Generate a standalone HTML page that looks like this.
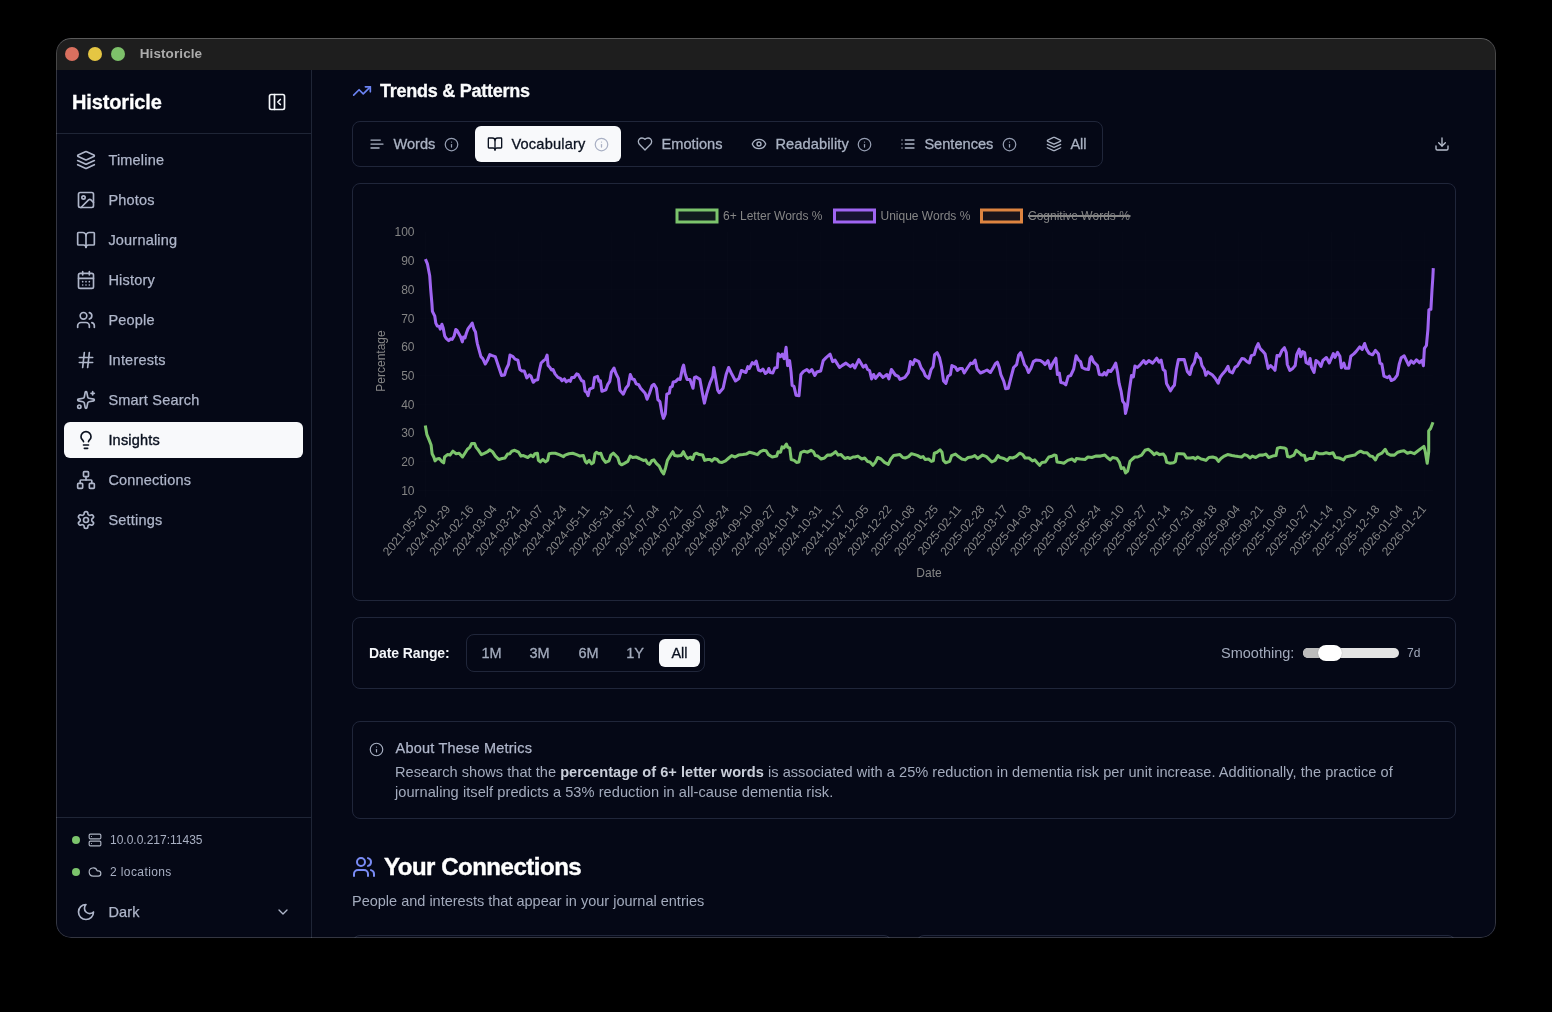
<!DOCTYPE html>
<html><head><meta charset="utf-8"><title>Historicle</title>
<style>
*{box-sizing:border-box;margin:0;padding:0}
html,body{width:1552px;height:1012px;background:#000;overflow:hidden}
body{font-family:"Liberation Sans",sans-serif;position:relative;-webkit-font-smoothing:antialiased}
#win{will-change:transform;position:absolute;left:56px;top:38px;width:1440px;height:900px;border-radius:15px;overflow:hidden;background:#050816}
#winborder{position:absolute;inset:0;border-radius:15px;border:1px solid rgba(255,255,255,0.19);border-top-color:rgba(255,255,255,0.27);pointer-events:none;z-index:50}
#titlebar{position:absolute;left:0;top:0;width:1440px;height:32px;background:#1e1e1e}
.tl{position:absolute;top:9px;width:14px;height:14px;border-radius:50%;display:block}
#wtitle{font-weight:bold;font-size:13.5px;color:#acacac;letter-spacing:0.1px}
#app{position:absolute;left:0;top:0;width:1440px;height:900px}
#side{position:absolute;left:0;top:32px;width:256px;height:868px;border-right:1px solid #1f2536}
#sidehead{position:absolute;left:0;top:95px;width:255px;height:1px;background:#1f2536}
#sidefoot{position:absolute;left:0;top:779px;width:255px;height:1px;background:#1f2536}
.t{position:absolute;white-space:nowrap;transform:translateY(-50%);line-height:1;display:block}
.ic{position:absolute;display:block;overflow:visible}
.h-brand{font-weight:bold;font-size:20px;color:#fff;letter-spacing:-0.15px;-webkit-text-stroke:0.3px #fff}
.nav{font-size:14.5px;font-weight:normal;letter-spacing:0.2px;-webkit-text-stroke:0.25px currentColor}
.navact{position:absolute;width:239px;height:36px;border-radius:6px;background:#f8f9fb}
.dot{position:absolute;width:8px;height:8px;border-radius:50%;background:#7cc46c}
.st{font-size:12px;color:#a8afc2}
.h-sec{font-weight:bold;font-size:18px;color:#fafbfc;letter-spacing:-0.25px;-webkit-text-stroke:0.3px #fafbfc}
.tabs{position:absolute;border:1px solid #20263a;border-radius:8px}
.tabact{position:absolute;background:#f8f9fb;border-radius:6px}
.tab{font-size:14.6px;-webkit-text-stroke:0.3px currentColor}
.card{position:absolute;border:1px solid #20263a;border-radius:8px}
.chart{position:absolute;display:block}
.b14{font-weight:bold;font-size:14px;color:#f4f6fa;letter-spacing:-0.1px}
.seg{position:absolute;border:1px solid #20263a;border-radius:8px}
.segact{position:absolute;background:#f8f9fb;border-radius:6px}
.segl{font-size:14.5px;-webkit-text-stroke:0.3px currentColor}
.sm14{font-size:14.5px;color:#a3abbd}
.sm12{font-size:12px;color:#a3abbd}
.trk{position:absolute;width:96px;height:10px;border-radius:5px;background:#e4e4e4}
.trkf{position:absolute;width:30px;height:10px;border-radius:5px 0 0 5px;background:#bcbcbc}
.thumb{position:absolute;width:24px;height:16px;border-radius:8px;background:#fff;box-shadow:0 0 1px rgba(0,0,0,.4)}
.abt{font-size:14.5px;color:#b0b7cb;letter-spacing:0.2px;-webkit-text-stroke:0.25px currentColor}
.para{position:absolute;font-size:14.6px;line-height:20px;color:#a3abbd;white-space:nowrap}
.para b{color:#c9ced9}
.h-big{font-weight:bold;font-size:24px;color:#fff;letter-spacing:-0.48px;-webkit-text-stroke:0.4px #fff}
.sub{font-size:14.5px;color:#a3abbd}
#ln1{letter-spacing:0.02px}
#ln2{letter-spacing:0.05px}

</style></head>
<body>
<div id="win">
  <div id="titlebar">
    <i class="tl" style="left:9px;background:#d9705f"></i><i class="tl" style="left:32px;background:#e5c643"></i><i class="tl" style="left:55px;background:#7dc06a"></i>
    <span class="t" id="wtitle" style="left:83.7px;top:16px">Historicle</span>
  </div>
  <div id="app">
    <div id="side"></div>
    <div id="sidehead"></div>
    <div id="sidefoot"></div>
<span class="t h-brand" style="left:16px;top:64px;">Historicle</span>
<svg class="ic" style="left:211px;top:54px;width:20px;height:20px;" viewBox="0 0 24 24" fill="none" stroke="#f4f6fa" stroke-width="2" stroke-linecap="round" stroke-linejoin="round"><rect width="18" height="18" x="3" y="3" rx="2"/><path d="M9 3v18"/><path d="m16 15-3-3 3-3"/></svg>
<svg class="ic" style="left:20px;top:112px;width:20px;height:20px;" viewBox="0 0 24 24" fill="none" stroke="#afb6ca" stroke-width="2" stroke-linecap="round" stroke-linejoin="round"><path d="m12.83 2.18a2 2 0 0 0-1.66 0L2.6 6.08a1 1 0 0 0 0 1.83l8.58 3.91a2 2 0 0 0 1.66 0l8.58-3.9a1 1 0 0 0 0-1.83Z"/><path d="m22 17.65-9.17 4.16a2 2 0 0 1-1.66 0L2 17.65"/><path d="m22 12.65-9.17 4.16a2 2 0 0 1-1.66 0L2 12.65"/></svg>
<span class="t nav" style="left:52.400000000000006px;top:122px;color:#afb6ca">Timeline</span>
<svg class="ic" style="left:20px;top:152px;width:20px;height:20px;" viewBox="0 0 24 24" fill="none" stroke="#afb6ca" stroke-width="2" stroke-linecap="round" stroke-linejoin="round"><rect width="18" height="18" x="3" y="3" rx="2" ry="2"/><circle cx="9" cy="9" r="2"/><path d="m21 15-3.086-3.086a2 2 0 0 0-2.828 0L6 21"/></svg>
<span class="t nav" style="left:52.400000000000006px;top:162px;color:#afb6ca">Photos</span>
<svg class="ic" style="left:20px;top:192px;width:20px;height:20px;" viewBox="0 0 24 24" fill="none" stroke="#afb6ca" stroke-width="2" stroke-linecap="round" stroke-linejoin="round"><path d="M12 7v14"/><path d="M3 18a1 1 0 0 1-1-1V4a1 1 0 0 1 1-1h5a4 4 0 0 1 4 4 4 4 0 0 1 4-4h5a1 1 0 0 1 1 1v13a1 1 0 0 1-1 1h-6a3 3 0 0 0-3 3 3 3 0 0 0-3-3z"/></svg>
<span class="t nav" style="left:52.400000000000006px;top:202px;color:#afb6ca">Journaling</span>
<svg class="ic" style="left:20px;top:232px;width:20px;height:20px;" viewBox="0 0 24 24" fill="none" stroke="#afb6ca" stroke-width="2" stroke-linecap="round" stroke-linejoin="round"><path d="M8 2v4"/><path d="M16 2v4"/><rect width="18" height="18" x="3" y="4" rx="2"/><path d="M3 10h18"/><path d="M8 14h.01"/><path d="M12 14h.01"/><path d="M16 14h.01"/><path d="M8 18h.01"/><path d="M12 18h.01"/><path d="M16 18h.01"/></svg>
<span class="t nav" style="left:52.400000000000006px;top:242px;color:#afb6ca">History</span>
<svg class="ic" style="left:20px;top:272px;width:20px;height:20px;" viewBox="0 0 24 24" fill="none" stroke="#afb6ca" stroke-width="2" stroke-linecap="round" stroke-linejoin="round"><path d="M16 21v-2a4 4 0 0 0-4-4H6a4 4 0 0 0-4 4v2"/><circle cx="9" cy="7" r="4"/><path d="M22 21v-2a4 4 0 0 0-3-3.87"/><path d="M16 3.13a4 4 0 0 1 0 7.75"/></svg>
<span class="t nav" style="left:52.400000000000006px;top:282px;color:#afb6ca">People</span>
<svg class="ic" style="left:20px;top:312px;width:20px;height:20px;" viewBox="0 0 24 24" fill="none" stroke="#afb6ca" stroke-width="2" stroke-linecap="round" stroke-linejoin="round"><line x1="4" x2="20" y1="9" y2="9"/><line x1="4" x2="20" y1="15" y2="15"/><line x1="10" x2="8" y1="3" y2="21"/><line x1="16" x2="14" y1="3" y2="21"/></svg>
<span class="t nav" style="left:52.400000000000006px;top:322px;color:#afb6ca">Interests</span>
<svg class="ic" style="left:20px;top:352px;width:20px;height:20px;" viewBox="0 0 24 24" fill="none" stroke="#afb6ca" stroke-width="2" stroke-linecap="round" stroke-linejoin="round"><path d="M11.017 2.814a1 1 0 0 1 1.966 0l1.051 5.558a2 2 0 0 0 1.594 1.594l5.558 1.051a1 1 0 0 1 0 1.966l-5.558 1.051a2 2 0 0 0-1.594 1.594l-1.051 5.558a1 1 0 0 1-1.966 0l-1.051-5.558a2 2 0 0 0-1.594-1.594l-5.558-1.051a1 1 0 0 1 0-1.966l5.558-1.051a2 2 0 0 0 1.594-1.594z"/><path d="M20 2v4"/><path d="M22 4h-4"/><circle cx="4" cy="20" r="2"/></svg>
<span class="t nav" style="left:52.400000000000006px;top:362px;color:#afb6ca">Smart Search</span>
<div class="navact" style="left:8px;top:384px"></div>
<svg class="ic" style="left:20px;top:392px;width:20px;height:20px;" viewBox="0 0 24 24" fill="none" stroke="#0b1220" stroke-width="2" stroke-linecap="round" stroke-linejoin="round"><path d="M15 14c.2-1 .7-1.700 1.500-2.500 1-.9 1.500-2.200 1.500-3.500A6 6 0 0 0 6 8c0 1 .2 2.200 1.500 3.500.7.700 1.300 1.500 1.500 2.500"/><path d="M9 18h6"/><path d="M10 22h4"/></svg>
<span class="t nav" style="left:52.400000000000006px;top:402px;color:#0b1220;-webkit-text-stroke:0.4px currentColor">Insights</span>
<svg class="ic" style="left:20px;top:432px;width:20px;height:20px;" viewBox="0 0 24 24" fill="none" stroke="#afb6ca" stroke-width="2" stroke-linecap="round" stroke-linejoin="round"><rect x="16" y="16" width="6" height="6" rx="1"/><rect x="2" y="16" width="6" height="6" rx="1"/><rect x="9" y="2" width="6" height="6" rx="1"/><path d="M5 16v-3a1 1 0 0 1 1-1h12a1 1 0 0 1 1 1v3"/><path d="M12 12V8"/></svg>
<span class="t nav" style="left:52.400000000000006px;top:442px;color:#afb6ca">Connections</span>
<svg class="ic" style="left:20px;top:472px;width:20px;height:20px;" viewBox="0 0 24 24" fill="none" stroke="#afb6ca" stroke-width="2" stroke-linecap="round" stroke-linejoin="round"><path d="M12.220 2h-.440a2 2 0 0 0-2 2v.180a2 2 0 0 1-1 1.730l-.430.250a2 2 0 0 1-2 0l-.150-.080a2 2 0 0 0-2.730.730l-.220.380a2 2 0 0 0 .730 2.730l.150.100a2 2 0 0 1 1 1.720v.510a2 2 0 0 1-1 1.740l-.150.090a2 2 0 0 0-.730 2.730l.220.380a2 2 0 0 0 2.730.730l.150-.080a2 2 0 0 1 2 0l.430.250a2 2 0 0 1 1 1.730V20a2 2 0 0 0 2 2h.440a2 2 0 0 0 2-2v-.180a2 2 0 0 1 1-1.730l.430-.250a2 2 0 0 1 2 0l.150.080a2 2 0 0 0 2.730-.730l.220-.390a2 2 0 0 0-.730-2.730l-.150-.080a2 2 0 0 1-1-1.740v-.500a2 2 0 0 1 1-1.740l.150-.090a2 2 0 0 0 .730-2.730l-.220-.380a2 2 0 0 0-2.730-.730l-.150.080a2 2 0 0 1-2 0l-.430-.250a2 2 0 0 1-1-1.730V4a2 2 0 0 0-2-2z"/><circle cx="12" cy="12" r="3"/></svg>
<span class="t nav" style="left:52.400000000000006px;top:482px;color:#afb6ca">Settings</span>
<div class="dot" style="left:16px;top:798px"></div>
<svg class="ic" style="left:32px;top:795px;width:14px;height:14px;" viewBox="0 0 24 24" fill="none" stroke="#aeb5c4" stroke-width="2" stroke-linecap="round" stroke-linejoin="round"><rect width="20" height="8" x="2" y="2" rx="2" ry="2"/><rect width="20" height="8" x="2" y="14" rx="2" ry="2"/><line x1="6" x2="6.01" y1="6" y2="6"/><line x1="6" x2="6.01" y1="18" y2="18"/></svg>
<span class="t st" style="left:54px;top:802px;">10.0.0.217:11435</span>
<div class="dot" style="left:16px;top:830px"></div>
<svg class="ic" style="left:32px;top:827px;width:14px;height:14px;" viewBox="0 0 24 24" fill="none" stroke="#aeb5c4" stroke-width="2" stroke-linecap="round" stroke-linejoin="round"><path d="M17.5 19H9a7 7 0 1 1 6.710-9h1.790a4.500 4.500 0 1 1 0 9Z"/></svg>
<span class="t st" style="left:54px;top:834px;letter-spacing:0.4px">2 locations</span>
<svg class="ic" style="left:20px;top:864px;width:20px;height:20px;" viewBox="0 0 24 24" fill="none" stroke="#afb6ca" stroke-width="2" stroke-linecap="round" stroke-linejoin="round"><path d="M12 3a6 6 0 0 0 9 9 9 9 0 1 1-9-9Z"/></svg>
<span class="t nav" style="left:52.400000000000006px;top:874px;color:#afb6ca">Dark</span>
<svg class="ic" style="left:219px;top:866px;width:16px;height:16px;" viewBox="0 0 24 24" fill="none" stroke="#afb6ca" stroke-width="2" stroke-linecap="round" stroke-linejoin="round"><path d="m6 9 6 6 6-6"/></svg>
<svg class="ic" style="left:296px;top:43px;width:20px;height:20px;" viewBox="0 0 24 24" fill="none" stroke="#6b83f2" stroke-width="2" stroke-linecap="round" stroke-linejoin="round"><polyline points="22 7 13.5 15.5 8.5 10.5 2 17"/><polyline points="16 7 22 7 22 13"/></svg>
<span class="t h-sec" style="left:324px;top:53px;">Trends &amp; Patterns</span>
<div class="tabs" style="left:296px;top:83px;width:751px;height:46px"></div>
<div class="tabact" style="left:419px;top:88px;width:146px;height:36px"></div>
<svg class="ic" style="left:313px;top:98px;width:16px;height:16px;" viewBox="0 0 24 24" fill="none" stroke="#aab2c3" stroke-width="2" stroke-linecap="round" stroke-linejoin="round"><path d="M17 6.1H3"/><path d="M21 12.100H3"/><path d="M15.100 18H3"/></svg>
<span class="t tab" style="left:337.4px;top:106px;color:#aab2c3;letter-spacing:0px">Words</span>
<svg class="ic" style="left:387.5px;top:98.5px;width:15px;height:15px;" viewBox="0 0 24 24" fill="none" stroke="#959db1" stroke-width="2" stroke-linecap="round" stroke-linejoin="round"><circle cx="12" cy="12" r="10"/><path d="M12 16v-4"/><path d="M12 8h.01"/></svg>
<svg class="ic" style="left:431px;top:98px;width:16px;height:16px;" viewBox="0 0 24 24" fill="none" stroke="#0b1220" stroke-width="2" stroke-linecap="round" stroke-linejoin="round"><path d="M12 7v14"/><path d="M3 18a1 1 0 0 1-1-1V4a1 1 0 0 1 1-1h5a4 4 0 0 1 4 4 4 4 0 0 1 4-4h5a1 1 0 0 1 1 1v13a1 1 0 0 1-1 1h-6a3 3 0 0 0-3 3 3 3 0 0 0-3-3z"/></svg>
<span class="t tab" style="left:455.4px;top:106px;color:#0b1220;letter-spacing:0.2px">Vocabulary</span>
<svg class="ic" style="left:537.5px;top:98.5px;width:15px;height:15px;" viewBox="0 0 24 24" fill="none" stroke="#a9b0c4" stroke-width="2" stroke-linecap="round" stroke-linejoin="round"><circle cx="12" cy="12" r="10"/><path d="M12 16v-4"/><path d="M12 8h.01"/></svg>
<svg class="ic" style="left:581px;top:98px;width:16px;height:16px;" viewBox="0 0 24 24" fill="none" stroke="#aab2c3" stroke-width="2" stroke-linecap="round" stroke-linejoin="round"><path d="M19 14c1.490-1.460 3-3.210 3-5.500A5.500 5.500 0 0 0 16.500 3c-1.760 0-3 .500-4.500 2-1.500-1.500-2.740-2-4.500-2A5.500 5.500 0 0 0 2 8.500c0 2.300 1.500 4.050 3 5.500l7 7Z"/></svg>
<span class="t tab" style="left:605.4px;top:106px;color:#aab2c3;letter-spacing:0.05px">Emotions</span>
<svg class="ic" style="left:695px;top:98px;width:16px;height:16px;" viewBox="0 0 24 24" fill="none" stroke="#aab2c3" stroke-width="2" stroke-linecap="round" stroke-linejoin="round"><path d="M2.062 12.348a1 1 0 0 1 0-.696 10.750 10.750 0 0 1 19.876 0 1 1 0 0 1 0 .696 10.750 10.750 0 0 1-19.876 0"/><circle cx="12" cy="12" r="3"/></svg>
<span class="t tab" style="left:719.4px;top:106px;color:#aab2c3;letter-spacing:0.12px">Readability</span>
<svg class="ic" style="left:800.5px;top:98.5px;width:15px;height:15px;" viewBox="0 0 24 24" fill="none" stroke="#959db1" stroke-width="2" stroke-linecap="round" stroke-linejoin="round"><circle cx="12" cy="12" r="10"/><path d="M12 16v-4"/><path d="M12 8h.01"/></svg>
<svg class="ic" style="left:844px;top:98px;width:16px;height:16px;" viewBox="0 0 24 24" fill="none" stroke="#aab2c3" stroke-width="2" stroke-linecap="round" stroke-linejoin="round"><line x1="8" x2="21" y1="6" y2="6"/><line x1="8" x2="21" y1="12" y2="12"/><line x1="8" x2="21" y1="18" y2="18"/><line x1="3" x2="3.010" y1="6" y2="6"/><line x1="3" x2="3.010" y1="12" y2="12"/><line x1="3" x2="3.010" y1="18" y2="18"/></svg>
<span class="t tab" style="left:868.4px;top:106px;color:#aab2c3;letter-spacing:0px">Sentences</span>
<svg class="ic" style="left:945.5px;top:98.5px;width:15px;height:15px;" viewBox="0 0 24 24" fill="none" stroke="#959db1" stroke-width="2" stroke-linecap="round" stroke-linejoin="round"><circle cx="12" cy="12" r="10"/><path d="M12 16v-4"/><path d="M12 8h.01"/></svg>
<svg class="ic" style="left:990px;top:98px;width:16px;height:16px;" viewBox="0 0 24 24" fill="none" stroke="#aab2c3" stroke-width="2" stroke-linecap="round" stroke-linejoin="round"><path d="m12.83 2.18a2 2 0 0 0-1.66 0L2.6 6.08a1 1 0 0 0 0 1.83l8.58 3.91a2 2 0 0 0 1.66 0l8.58-3.9a1 1 0 0 0 0-1.83Z"/><path d="m22 17.65-9.17 4.16a2 2 0 0 1-1.66 0L2 17.65"/><path d="m22 12.65-9.17 4.16a2 2 0 0 1-1.66 0L2 12.65"/></svg>
<span class="t tab" style="left:1014.4px;top:106px;color:#aab2c3;letter-spacing:0px">All</span>
<svg class="ic" style="left:1378px;top:98px;width:16px;height:16px;" viewBox="0 0 24 24" fill="none" stroke="#b9c0cf" stroke-width="2" stroke-linecap="round" stroke-linejoin="round"><path d="M21 15v4a2 2 0 0 1-2 2H5a2 2 0 0 1-2-2v-4"/><polyline points="7 10 12 15 17 10"/><line x1="12" x2="12" y1="15" y2="3"/></svg>
<div class="card" style="left:296px;top:145px;width:1104px;height:418px"></div><svg class="chart" style="left:296px;top:145px" width="1104" height="418" viewBox="0 0 1104 418" font-family="Liberation Sans, sans-serif">
<line x1="66" x2="1081" y1="49.0" y2="49.0" stroke="rgba(255,255,255,0.012)" stroke-width="1"/>
<line x1="66" x2="1081" y1="77.7" y2="77.7" stroke="rgba(255,255,255,0.012)" stroke-width="1"/>
<line x1="66" x2="1081" y1="106.4" y2="106.4" stroke="rgba(255,255,255,0.012)" stroke-width="1"/>
<line x1="66" x2="1081" y1="135.2" y2="135.2" stroke="rgba(255,255,255,0.012)" stroke-width="1"/>
<line x1="66" x2="1081" y1="163.9" y2="163.9" stroke="rgba(255,255,255,0.012)" stroke-width="1"/>
<line x1="66" x2="1081" y1="192.6" y2="192.6" stroke="rgba(255,255,255,0.012)" stroke-width="1"/>
<line x1="66" x2="1081" y1="221.3" y2="221.3" stroke="rgba(255,255,255,0.012)" stroke-width="1"/>
<line x1="66" x2="1081" y1="250.1" y2="250.1" stroke="rgba(255,255,255,0.012)" stroke-width="1"/>
<line x1="66" x2="1081" y1="278.8" y2="278.8" stroke="rgba(255,255,255,0.012)" stroke-width="1"/>
<line x1="66" x2="1081" y1="307.5" y2="307.5" stroke="rgba(255,255,255,0.012)" stroke-width="1"/>
<line x1="73.5" x2="73.5" y1="49" y2="314" stroke="rgba(255,255,255,0.012)" stroke-width="1"/>
<line x1="96.7" x2="96.7" y1="49" y2="314" stroke="rgba(255,255,255,0.012)" stroke-width="1"/>
<line x1="120.0" x2="120.0" y1="49" y2="314" stroke="rgba(255,255,255,0.012)" stroke-width="1"/>
<line x1="143.2" x2="143.2" y1="49" y2="314" stroke="rgba(255,255,255,0.012)" stroke-width="1"/>
<line x1="166.4" x2="166.4" y1="49" y2="314" stroke="rgba(255,255,255,0.012)" stroke-width="1"/>
<line x1="189.6" x2="189.6" y1="49" y2="314" stroke="rgba(255,255,255,0.012)" stroke-width="1"/>
<line x1="212.9" x2="212.9" y1="49" y2="314" stroke="rgba(255,255,255,0.012)" stroke-width="1"/>
<line x1="236.1" x2="236.1" y1="49" y2="314" stroke="rgba(255,255,255,0.012)" stroke-width="1"/>
<line x1="259.3" x2="259.3" y1="49" y2="314" stroke="rgba(255,255,255,0.012)" stroke-width="1"/>
<line x1="282.6" x2="282.6" y1="49" y2="314" stroke="rgba(255,255,255,0.012)" stroke-width="1"/>
<line x1="305.8" x2="305.8" y1="49" y2="314" stroke="rgba(255,255,255,0.012)" stroke-width="1"/>
<line x1="329.0" x2="329.0" y1="49" y2="314" stroke="rgba(255,255,255,0.012)" stroke-width="1"/>
<line x1="352.3" x2="352.3" y1="49" y2="314" stroke="rgba(255,255,255,0.012)" stroke-width="1"/>
<line x1="375.5" x2="375.5" y1="49" y2="314" stroke="rgba(255,255,255,0.012)" stroke-width="1"/>
<line x1="398.7" x2="398.7" y1="49" y2="314" stroke="rgba(255,255,255,0.012)" stroke-width="1"/>
<line x1="422.0" x2="422.0" y1="49" y2="314" stroke="rgba(255,255,255,0.012)" stroke-width="1"/>
<line x1="445.2" x2="445.2" y1="49" y2="314" stroke="rgba(255,255,255,0.012)" stroke-width="1"/>
<line x1="468.4" x2="468.4" y1="49" y2="314" stroke="rgba(255,255,255,0.012)" stroke-width="1"/>
<line x1="491.6" x2="491.6" y1="49" y2="314" stroke="rgba(255,255,255,0.012)" stroke-width="1"/>
<line x1="514.9" x2="514.9" y1="49" y2="314" stroke="rgba(255,255,255,0.012)" stroke-width="1"/>
<line x1="538.1" x2="538.1" y1="49" y2="314" stroke="rgba(255,255,255,0.012)" stroke-width="1"/>
<line x1="561.3" x2="561.3" y1="49" y2="314" stroke="rgba(255,255,255,0.012)" stroke-width="1"/>
<line x1="584.6" x2="584.6" y1="49" y2="314" stroke="rgba(255,255,255,0.012)" stroke-width="1"/>
<line x1="607.8" x2="607.8" y1="49" y2="314" stroke="rgba(255,255,255,0.012)" stroke-width="1"/>
<line x1="631.0" x2="631.0" y1="49" y2="314" stroke="rgba(255,255,255,0.012)" stroke-width="1"/>
<line x1="654.2" x2="654.2" y1="49" y2="314" stroke="rgba(255,255,255,0.012)" stroke-width="1"/>
<line x1="677.5" x2="677.5" y1="49" y2="314" stroke="rgba(255,255,255,0.012)" stroke-width="1"/>
<line x1="700.7" x2="700.7" y1="49" y2="314" stroke="rgba(255,255,255,0.012)" stroke-width="1"/>
<line x1="723.9" x2="723.9" y1="49" y2="314" stroke="rgba(255,255,255,0.012)" stroke-width="1"/>
<line x1="747.2" x2="747.2" y1="49" y2="314" stroke="rgba(255,255,255,0.012)" stroke-width="1"/>
<line x1="770.4" x2="770.4" y1="49" y2="314" stroke="rgba(255,255,255,0.012)" stroke-width="1"/>
<line x1="793.6" x2="793.6" y1="49" y2="314" stroke="rgba(255,255,255,0.012)" stroke-width="1"/>
<line x1="816.9" x2="816.9" y1="49" y2="314" stroke="rgba(255,255,255,0.012)" stroke-width="1"/>
<line x1="840.1" x2="840.1" y1="49" y2="314" stroke="rgba(255,255,255,0.012)" stroke-width="1"/>
<line x1="863.3" x2="863.3" y1="49" y2="314" stroke="rgba(255,255,255,0.012)" stroke-width="1"/>
<line x1="886.6" x2="886.6" y1="49" y2="314" stroke="rgba(255,255,255,0.012)" stroke-width="1"/>
<line x1="909.8" x2="909.8" y1="49" y2="314" stroke="rgba(255,255,255,0.012)" stroke-width="1"/>
<line x1="933.0" x2="933.0" y1="49" y2="314" stroke="rgba(255,255,255,0.012)" stroke-width="1"/>
<line x1="956.2" x2="956.2" y1="49" y2="314" stroke="rgba(255,255,255,0.012)" stroke-width="1"/>
<line x1="979.5" x2="979.5" y1="49" y2="314" stroke="rgba(255,255,255,0.012)" stroke-width="1"/>
<line x1="1002.7" x2="1002.7" y1="49" y2="314" stroke="rgba(255,255,255,0.012)" stroke-width="1"/>
<line x1="1025.9" x2="1025.9" y1="49" y2="314" stroke="rgba(255,255,255,0.012)" stroke-width="1"/>
<line x1="1049.2" x2="1049.2" y1="49" y2="314" stroke="rgba(255,255,255,0.012)" stroke-width="1"/>
<line x1="1072.4" x2="1072.4" y1="49" y2="314" stroke="rgba(255,255,255,0.012)" stroke-width="1"/>
<text x="62.5" y="53.3" text-anchor="end" font-size="12" fill="#848484">100</text>
<text x="62.5" y="82.0" text-anchor="end" font-size="12" fill="#848484">90</text>
<text x="62.5" y="110.7" text-anchor="end" font-size="12" fill="#848484">80</text>
<text x="62.5" y="139.5" text-anchor="end" font-size="12" fill="#848484">70</text>
<text x="62.5" y="168.2" text-anchor="end" font-size="12" fill="#848484">60</text>
<text x="62.5" y="196.9" text-anchor="end" font-size="12" fill="#848484">50</text>
<text x="62.5" y="225.6" text-anchor="end" font-size="12" fill="#848484">40</text>
<text x="62.5" y="254.4" text-anchor="end" font-size="12" fill="#848484">30</text>
<text x="62.5" y="283.1" text-anchor="end" font-size="12" fill="#848484">20</text>
<text x="62.5" y="311.8" text-anchor="end" font-size="12" fill="#848484">10</text>
<text transform="translate(32.5,178) rotate(-90)" text-anchor="middle" font-size="12" fill="#868686">Percentage</text>
<text x="577" y="394" text-anchor="middle" font-size="12" fill="#868686">Date</text>
<text transform="translate(75.8,326.5) rotate(-50)" text-anchor="end" font-size="12" fill="#868686">2021-05-20</text>
<text transform="translate(99.0,326.5) rotate(-50)" text-anchor="end" font-size="12" fill="#868686">2024-01-29</text>
<text transform="translate(122.3,326.5) rotate(-50)" text-anchor="end" font-size="12" fill="#868686">2024-02-16</text>
<text transform="translate(145.5,326.5) rotate(-50)" text-anchor="end" font-size="12" fill="#868686">2024-03-04</text>
<text transform="translate(168.7,326.5) rotate(-50)" text-anchor="end" font-size="12" fill="#868686">2024-03-21</text>
<text transform="translate(191.9,326.5) rotate(-50)" text-anchor="end" font-size="12" fill="#868686">2024-04-07</text>
<text transform="translate(215.2,326.5) rotate(-50)" text-anchor="end" font-size="12" fill="#868686">2024-04-24</text>
<text transform="translate(238.4,326.5) rotate(-50)" text-anchor="end" font-size="12" fill="#868686">2024-05-11</text>
<text transform="translate(261.6,326.5) rotate(-50)" text-anchor="end" font-size="12" fill="#868686">2024-05-31</text>
<text transform="translate(284.9,326.5) rotate(-50)" text-anchor="end" font-size="12" fill="#868686">2024-06-17</text>
<text transform="translate(308.1,326.5) rotate(-50)" text-anchor="end" font-size="12" fill="#868686">2024-07-04</text>
<text transform="translate(331.3,326.5) rotate(-50)" text-anchor="end" font-size="12" fill="#868686">2024-07-21</text>
<text transform="translate(354.6,326.5) rotate(-50)" text-anchor="end" font-size="12" fill="#868686">2024-08-07</text>
<text transform="translate(377.8,326.5) rotate(-50)" text-anchor="end" font-size="12" fill="#868686">2024-08-24</text>
<text transform="translate(401.0,326.5) rotate(-50)" text-anchor="end" font-size="12" fill="#868686">2024-09-10</text>
<text transform="translate(424.3,326.5) rotate(-50)" text-anchor="end" font-size="12" fill="#868686">2024-09-27</text>
<text transform="translate(447.5,326.5) rotate(-50)" text-anchor="end" font-size="12" fill="#868686">2024-10-14</text>
<text transform="translate(470.7,326.5) rotate(-50)" text-anchor="end" font-size="12" fill="#868686">2024-10-31</text>
<text transform="translate(493.9,326.5) rotate(-50)" text-anchor="end" font-size="12" fill="#868686">2024-11-17</text>
<text transform="translate(517.2,326.5) rotate(-50)" text-anchor="end" font-size="12" fill="#868686">2024-12-05</text>
<text transform="translate(540.4,326.5) rotate(-50)" text-anchor="end" font-size="12" fill="#868686">2024-12-22</text>
<text transform="translate(563.6,326.5) rotate(-50)" text-anchor="end" font-size="12" fill="#868686">2025-01-08</text>
<text transform="translate(586.9,326.5) rotate(-50)" text-anchor="end" font-size="12" fill="#868686">2025-01-25</text>
<text transform="translate(610.1,326.5) rotate(-50)" text-anchor="end" font-size="12" fill="#868686">2025-02-11</text>
<text transform="translate(633.3,326.5) rotate(-50)" text-anchor="end" font-size="12" fill="#868686">2025-02-28</text>
<text transform="translate(656.5,326.5) rotate(-50)" text-anchor="end" font-size="12" fill="#868686">2025-03-17</text>
<text transform="translate(679.8,326.5) rotate(-50)" text-anchor="end" font-size="12" fill="#868686">2025-04-03</text>
<text transform="translate(703.0,326.5) rotate(-50)" text-anchor="end" font-size="12" fill="#868686">2025-04-20</text>
<text transform="translate(726.2,326.5) rotate(-50)" text-anchor="end" font-size="12" fill="#868686">2025-05-07</text>
<text transform="translate(749.5,326.5) rotate(-50)" text-anchor="end" font-size="12" fill="#868686">2025-05-24</text>
<text transform="translate(772.7,326.5) rotate(-50)" text-anchor="end" font-size="12" fill="#868686">2025-06-10</text>
<text transform="translate(795.9,326.5) rotate(-50)" text-anchor="end" font-size="12" fill="#868686">2025-06-27</text>
<text transform="translate(819.2,326.5) rotate(-50)" text-anchor="end" font-size="12" fill="#868686">2025-07-14</text>
<text transform="translate(842.4,326.5) rotate(-50)" text-anchor="end" font-size="12" fill="#868686">2025-07-31</text>
<text transform="translate(865.6,326.5) rotate(-50)" text-anchor="end" font-size="12" fill="#868686">2025-08-18</text>
<text transform="translate(888.9,326.5) rotate(-50)" text-anchor="end" font-size="12" fill="#868686">2025-09-04</text>
<text transform="translate(912.1,326.5) rotate(-50)" text-anchor="end" font-size="12" fill="#868686">2025-09-21</text>
<text transform="translate(935.3,326.5) rotate(-50)" text-anchor="end" font-size="12" fill="#868686">2025-10-08</text>
<text transform="translate(958.5,326.5) rotate(-50)" text-anchor="end" font-size="12" fill="#868686">2025-10-27</text>
<text transform="translate(981.8,326.5) rotate(-50)" text-anchor="end" font-size="12" fill="#868686">2025-11-14</text>
<text transform="translate(1005.0,326.5) rotate(-50)" text-anchor="end" font-size="12" fill="#868686">2025-12-01</text>
<text transform="translate(1028.2,326.5) rotate(-50)" text-anchor="end" font-size="12" fill="#868686">2025-12-18</text>
<text transform="translate(1051.5,326.5) rotate(-50)" text-anchor="end" font-size="12" fill="#868686">2026-01-04</text>
<text transform="translate(1074.7,326.5) rotate(-50)" text-anchor="end" font-size="12" fill="#868686">2026-01-21</text>
<rect x="325.0" y="27.0" width="40" height="12" fill="rgba(124,196,108,0.10)" stroke="#7cc46c" stroke-width="3"/><text x="371" y="37.30000000000001" font-size="12" fill="#868686">6+ Letter Words %</text>
<rect x="482.5" y="27.0" width="40" height="12" fill="rgba(160,101,242,0.12)" stroke="#a065f2" stroke-width="3"/><text x="528.5" y="37.30000000000001" font-size="12" fill="#868686">Unique Words %</text>
<rect x="629.5" y="27.0" width="40" height="12" fill="rgba(222,132,64,0.10)" stroke="#de8440" stroke-width="3"/><text x="676" y="37.30000000000001" font-size="12" fill="#868686">Cognitive Words %</text><line x1="676" x2="778.5" y1="33" y2="33" stroke="#868686" stroke-width="2"/>
<path d="M73.4,76.1 L75.4,80.8 L77.7,92.7 L78.7,106.5 L79.9,120.4 L80.4,128.3 L82.8,133.2 L83.8,140.1 L85.3,143.1 L87.3,143.6 L88.3,146.1 L89.9,141.3 L91.2,145.1 L92.7,153.0 L94.2,155.4 L96.7,157.7 L98.6,155.9 L100.1,156.4 L102.1,153.0 L103.8,146.5 L105.1,147.5 L107.0,151.0 L108.7,154.0 L110.3,158.9 L111.5,154.0 L113.0,154.9 L114.4,150.0 L116.1,145.6 L118.4,142.6 L120.2,140.1 L121.9,146.1 L123.5,149.0 L124.8,157.9 L125.4,160.8 L128.9,173.6 L130.8,175.6 L133.3,181.0 L135.3,177.6 L137.8,171.6 L140.2,172.6 L143.2,173.6 L146.2,182.5 L149.6,192.4 L152.6,191.9 L154.1,186.5 L156.5,181.5 L158.0,172.1 L161.0,173.6 L163.0,176.1 L165.9,177.1 L167.9,186.5 L169.9,187.9 L172.3,187.9 L174.8,194.9 L177.3,191.9 L178.8,192.9 L181.2,199.3 L183.2,197.3 L185.7,196.8 L187.2,188.4 L189.1,180.0 L191.6,177.6 L193.6,176.1 L195.1,172.1 L196.1,182.5 L198.0,184.5 L199.5,187.0 L201.0,186.5 L203.0,190.9 L205.9,194.4 L208.4,195.4 L209.9,197.8 L212.4,195.9 L214.3,198.8 L216.8,197.3 L218.3,198.3 L219.8,194.4 L222.2,194.4 L224.7,190.9 L226.2,191.4 L229.7,197.8 L231.6,198.3 L233.1,208.2 L234.6,209.2 L236.1,212.7 L237.6,206.2 L241.0,204.7 L242.5,194.4 L245.5,193.4 L247.0,198.3 L248.4,197.8 L249.9,208.2 L253.9,206.7 L255.8,201.3 L257.8,198.3 L259.3,189.4 L262.0,185.0 L263.9,190.5 L266.4,195.4 L267.9,207.3 L271.3,211.2 L273.8,205.3 L276.3,202.3 L278.3,191.5 L280.2,195.9 L282.2,196.4 L284.2,200.9 L286.7,201.8 L288.6,205.3 L293.1,210.2 L295.1,216.2 L297.5,210.2 L300.0,202.8 L302.0,201.3 L304.4,205.3 L305.9,216.7 L307.9,218.6 L309.9,230.0 L311.4,235.4 L313.3,231.0 L314.8,211.2 L317.3,210.2 L318.3,204.3 L320.3,203.3 L321.2,198.9 L323.7,198.4 L326.2,195.9 L328.2,196.4 L330.6,184.5 L331.6,182.1 L333.1,190.5 L335.1,196.4 L338.0,196.4 L341.0,205.3 L342.5,194.4 L344.0,193.9 L347.9,196.4 L350.4,210.2 L352.4,220.1 L354.8,210.2 L357.8,200.4 L360.8,193.4 L361.8,184.5 L363.2,192.5 L365.7,207.3 L367.2,209.7 L371.1,205.3 L374.1,191.5 L376.6,184.5 L379.5,190.5 L383.5,197.9 L387.0,195.4 L389.4,187.5 L393.9,189.5 L395.8,183.6 L397.3,185.5 L400.3,179.6 L402.3,181.1 L404.2,178.1 L406.5,187.0 L408.9,188.0 L410.9,186.0 L413.4,190.5 L415.4,189.0 L416.8,185.5 L418.3,189.5 L420.8,190.0 L422.8,185.0 L425.2,184.5 L426.2,170.7 L428.2,173.7 L430.2,171.2 L432.2,175.7 L434.1,164.3 L435.6,182.6 L437.6,177.6 L439.1,189.5 L440.1,202.3 L442.0,203.3 L444.0,212.2 L447.0,212.7 L448.9,191.5 L451.4,188.5 L454.9,186.5 L457.3,189.0 L459.8,186.5 L462.8,192.5 L464.8,189.0 L468.7,188.0 L471.2,177.6 L474.1,174.7 L478.1,171.2 L480.6,178.6 L483.0,177.1 L487.5,184.5 L490.0,182.6 L493.9,180.1 L498.4,183.6 L500.8,181.6 L502.8,185.0 L506.8,176.6 L511.2,184.1 L513.7,182.1 L515.6,186.5 L517.6,187.5 L519.6,195.9 L521.6,191.5 L523.6,195.4 L527.5,190.5 L531.0,194.4 L534.9,191.5 L536.9,195.9 L539.4,186.5 L543.3,192.0 L546.3,193.4 L548.0,196.4 L552.9,194.4 L556.4,189.5 L558.4,178.6 L560.8,181.6 L562.8,176.6 L566.8,178.6 L569.2,185.0 L571.7,188.5 L573.2,192.5 L576.7,195.4 L579.1,186.5 L581.1,183.6 L582.6,171.7 L585.1,169.7 L587.5,174.7 L589.5,183.6 L591.5,197.9 L593.9,200.4 L595.9,193.4 L598.4,191.5 L599.9,182.6 L603.3,184.1 L605.3,187.5 L607.8,185.5 L610.3,185.5 L612.2,190.0 L615.7,184.5 L618.7,180.1 L620.6,180.6 L623.1,177.1 L625.1,186.0 L628.5,190.0 L632.0,188.5 L635.0,187.0 L638.4,189.5 L641.4,184.5 L643.4,180.6 L645.3,179.1 L647.3,184.5 L648.8,191.5 L651.8,198.4 L653.7,205.8 L656.2,205.3 L658.2,197.4 L661.6,184.5 L664.6,181.6 L666.6,172.2 L668.6,169.7 L671.0,176.6 L672.5,181.6 L674.5,184.1 L676.5,189.5 L678.9,185.5 L681.4,178.6 L683.9,177.1 L688.3,177.6 L691.3,179.6 L693.0,181.6 L696.0,177.6 L698.4,185.5 L700.9,180.1 L703.9,175.2 L705.4,191.5 L707.3,190.0 L708.8,199.4 L711.3,199.9 L713.8,201.8 L716.2,193.4 L718.7,192.5 L721.7,186.0 L724.1,172.7 L726.6,177.1 L728.6,178.6 L730.1,184.5 L733.0,186.0 L736.5,186.5 L738.0,175.7 L739.4,173.7 L741.4,178.6 L745.4,182.6 L747.3,191.5 L750.8,192.0 L752.3,189.5 L754.3,192.0 L756.2,187.5 L758.7,188.5 L761.2,185.0 L763.7,180.1 L765.6,189.5 L767.1,200.4 L769.1,208.3 L770.6,218.1 L772.5,220.6 L773.5,230.5 L775.5,222.1 L777.0,209.3 L779.5,192.5 L781.4,193.9 L782.9,183.1 L785.4,184.5 L788.4,181.6 L791.8,177.6 L793.8,180.6 L796.8,177.6 L800.7,180.1 L804.7,175.2 L807.1,179.1 L809.1,177.1 L811.1,186.5 L813.1,188.0 L814.5,200.4 L818.5,207.8 L821.0,203.8 L822.4,202.3 L824.4,186.5 L826.4,176.6 L829.4,176.6 L832.3,176.6 L835.3,188.5 L837.8,191.5 L838.0,191.3 L840.0,183.4 L842.4,179.5 L844.4,170.6 L846.4,174.1 L848.4,175.5 L849.9,182.5 L852.3,186.4 L853.8,192.3 L855.8,188.9 L857.8,190.4 L860.2,191.8 L863.2,195.3 L866.2,200.2 L868.1,194.3 L870.6,190.9 L873.6,187.4 L876.0,183.4 L877.5,188.4 L880.5,189.9 L883.0,184.4 L885.4,182.9 L887.4,179.5 L889.9,175.5 L892.3,176.0 L894.8,178.5 L897.3,180.0 L899.3,172.6 L902.2,171.6 L904.2,164.7 L906.2,160.7 L908.2,165.7 L910.6,168.1 L913.1,171.1 L915.1,180.5 L916.1,185.4 L918.5,182.5 L921.0,184.9 L923.0,187.4 L925.0,172.6 L927.4,173.1 L929.9,167.6 L932.4,164.7 L934.3,169.6 L935.3,181.5 L937.8,187.4 L940.8,185.4 L943.2,182.5 L944.7,171.6 L947.2,166.2 L948.7,173.6 L950.6,168.6 L952.6,169.6 L954.1,179.5 L956.6,181.0 L958.1,175.5 L959.5,184.4 L962.0,189.4 L964.0,177.5 L966.5,179.5 L968.9,183.4 L970.9,177.5 L974.4,174.5 L977.3,180.0 L981.3,170.6 L983.0,174.3 L985.5,169.4 L987.9,173.3 L989.4,184.7 L991.9,180.2 L993.4,185.2 L996.8,185.2 L998.8,173.3 L1001.8,170.9 L1004.2,168.4 L1007.7,163.9 L1010.2,166.4 L1012.6,160.5 L1014.6,166.4 L1017.1,170.4 L1020.5,171.8 L1023.5,167.4 L1026.5,170.9 L1028.0,180.2 L1029.9,181.2 L1031.9,193.1 L1035.4,194.6 L1037.3,193.1 L1039.3,197.5 L1042.3,196.1 L1045.3,192.1 L1047.2,181.2 L1049.2,174.8 L1052.2,172.8 L1054.6,177.8 L1056.6,182.2 L1059.1,177.8 L1061.6,180.2 L1064.5,176.8 L1067.5,179.7 L1070.0,177.3 L1071.4,182.7 L1072.4,165.4 L1074.4,162.5 L1075.9,146.6 L1076.9,126.9 L1078.8,125.9 L1078.9,126.3 L1080.0,107.0 L1080.8,95.0 L1081.3,85.1" fill="none" stroke="#a065f2" stroke-width="3.05" stroke-linejoin="round" stroke-linecap="butt"/>
<path d="M73.3,242.6 L74.8,251.3 L77.2,257.1 L79.1,262.0 L80.1,270.7 L82.0,274.5 L83.0,277.9 L84.9,276.0 L87.3,275.5 L89.7,278.4 L91.7,279.8 L92.6,274.0 L95.5,271.6 L98.0,272.1 L100.9,268.2 L104.2,270.7 L107.1,270.2 L110.5,274.0 L112.9,270.2 L115.4,266.3 L117.8,264.4 L119.7,260.5 L122.6,260.5 L124.1,264.4 L126.5,267.3 L129.4,271.6 L132.8,270.2 L135.7,268.7 L137.6,266.8 L140.5,268.7 L143.4,273.1 L146.8,276.5 L150.1,275.5 L153.0,275.0 L155.5,271.1 L157.9,270.7 L159.8,268.2 L162.7,267.3 L166.6,269.2 L169.0,273.1 L171.4,272.6 L175.8,274.5 L178.7,272.1 L181.1,273.6 L183.0,270.7 L185.4,270.2 L186.4,277.4 L188.3,278.9 L190.7,276.5 L193.6,278.9 L195.6,277.4 L197.0,270.7 L199.9,270.2 L203.3,270.2 L207.2,271.6 L211.5,273.6 L213.0,272.1 L216.9,270.7 L220.7,270.2 L224.6,271.6 L228.0,273.1 L231.4,272.6 L233.3,278.4 L234.7,279.8 L237.2,277.4 L239.6,280.8 L241.5,279.4 L243.0,270.7 L244.4,269.2 L246.8,270.7 L248.8,270.2 L250.7,275.5 L253.6,279.4 L257.0,277.9 L258.9,272.1 L261.3,270.2 L263.3,272.1 L265.7,274.5 L267.6,280.3 L269.5,281.8 L272.4,280.3 L275.8,278.4 L278.2,273.1 L280.7,274.5 L284.0,274.0 L287.4,275.5 L291.3,277.4 L293.7,276.9 L295.6,280.3 L297.6,281.3 L300.0,277.4 L301.9,276.9 L304.3,280.3 L307.2,283.2 L309.6,288.1 L311.6,291.0 L313.5,285.2 L315.4,277.4 L318.3,272.6 L320.8,268.7 L322.7,272.6 L325.6,273.1 L329.0,272.6 L331.4,268.7 L333.3,272.6 L335.7,275.5 L338.6,274.0 L340.6,276.5 L342.5,271.1 L344.4,270.2 L347.3,271.6 L350.7,272.1 L352.7,277.4 L355.6,276.5 L358.0,276.5 L359.9,277.9 L362.3,275.5 L365.2,276.5 L367.2,278.9 L370.1,279.4 L373.5,277.9 L376.8,275.0 L379.7,272.6 L383.1,274.0 L386.5,272.1 L390.9,271.6 L394.2,271.1 L397.6,269.2 L401.5,270.2 L405.4,271.6 L408.3,268.7 L411.2,267.3 L414.1,267.8 L416.5,271.6 L420.3,274.0 L424.7,273.1 L426.1,268.7 L428.6,269.2 L430.0,263.9 L431.9,264.9 L434.4,261.0 L435.8,264.4 L437.7,264.9 L439.2,276.5 L442.1,277.4 L444.5,279.4 L446.9,278.9 L448.8,269.7 L452.2,268.2 L455.6,269.2 L459.0,267.3 L461.4,268.7 L463.3,272.6 L465.8,273.1 L469.1,276.0 L472.5,275.0 L475.4,272.1 L478.8,272.1 L481.7,270.2 L483.6,268.7 L486.1,272.1 L489.0,271.6 L492.8,275.5 L495.7,274.5 L498.1,275.5 L501.0,274.0 L503.0,274.0 L505.9,273.1 L509.8,276.0 L512.7,275.0 L515.6,278.4 L518.0,278.9 L520.9,282.3 L523.3,279.4 L525.7,274.5 L529.1,276.0 L532.5,279.4 L536.3,281.3 L538.8,276.0 L541.7,272.6 L545.0,272.1 L547.9,271.6 L550.8,274.5 L553.3,275.0 L556.6,273.6 L559.5,270.7 L562.9,271.6 L565.8,272.6 L568.7,274.5 L571.1,273.6 L573.1,276.5 L576.5,276.0 L579.4,278.4 L581.3,277.9 L582.3,270.2 L585.1,269.2 L588.0,266.8 L590.0,269.2 L591.4,277.4 L593.8,279.8 L597.7,278.4 L599.6,272.6 L603.5,271.1 L606.4,273.6 L609.8,276.0 L613.2,276.9 L616.1,274.5 L619.9,274.0 L622.8,272.6 L625.7,275.5 L630.6,272.1 L634.4,273.6 L637.3,276.5 L639.8,278.9 L643.1,277.4 L646.0,272.6 L648.0,274.5 L651.9,275.5 L655.2,277.4 L657.7,274.5 L660.6,275.0 L663.9,273.6 L667.8,270.2 L670.7,271.6 L673.1,275.0 L677.0,275.0 L680.4,277.9 L682.8,276.9 L685.2,279.8 L687.6,282.3 L690.0,279.4 L693.4,278.9 L696.8,274.0 L699.2,273.6 L702.1,272.1 L704.1,272.6 L705.0,278.9 L708.4,279.4 L711.8,280.3 L715.7,277.4 L720.0,276.0 L722.9,278.4 L724.4,275.5 L728.2,276.0 L733.0,276.5 L735.9,274.0 L739.8,274.5 L743.7,273.1 L748.5,273.1 L752.9,272.1 L755.3,274.5 L758.2,276.9 L760.6,274.5 L764.9,275.5 L767.4,279.4 L769.3,285.6 L771.7,284.7 L773.6,290.0 L775.6,288.1 L778.0,278.4 L779.9,276.5 L782.8,274.0 L785.7,274.0 L789.6,272.1 L793.0,267.3 L796.4,266.3 L799.3,268.7 L802.2,271.6 L804.6,269.7 L807.5,271.6 L811.4,271.1 L813.3,273.6 L814.7,279.4 L818.1,280.3 L821.5,279.8 L823.4,278.4 L824.9,270.7 L828.3,270.7 L832.1,271.1 L834.6,275.0 L838.4,275.0 L841.3,274.5 L843.3,276.0 L845.7,274.0 L849.1,276.0 L851.5,276.5 L853.9,277.4 L856.8,274.5 L860.7,274.0 L864.0,275.0 L866.5,278.4 L868.9,275.5 L872.3,273.1 L875.6,271.6 L880.0,272.6 L882.9,273.1 L886.3,273.6 L889.6,274.0 L892.5,271.6 L895.4,272.6 L897.9,275.0 L900.3,273.1 L903.7,274.5 L907.5,272.1 L910.9,272.1 L913.8,271.1 L916.7,274.5 L920.6,273.1 L924.0,272.6 L925.4,265.3 L928.3,264.4 L932.2,264.9 L934.1,265.8 L935.6,273.6 L938.0,274.0 L941.9,272.1 L944.3,267.3 L947.2,269.7 L949.6,272.1 L952.5,272.6 L953.9,277.4 L957.3,275.5 L961.2,275.5 L963.6,269.2 L967.0,270.7 L970.9,270.7 L974.2,269.7 L977.6,270.7 L981.0,269.7 L983.4,274.5 L987.3,275.0 L991.6,276.9 L993.6,274.0 L997.9,273.1 L1002.8,272.1 L1005.7,269.7 L1008.6,268.2 L1011.5,269.7 L1014.8,269.7 L1018.2,273.1 L1020.6,273.6 L1023.5,276.9 L1025.9,272.1 L1029.8,270.2 L1033.2,266.3 L1035.6,270.7 L1038.5,272.1 L1042.4,272.1 L1045.8,269.2 L1049.1,268.2 L1052.0,267.8 L1055.4,270.2 L1058.3,269.2 L1062.2,270.7 L1066.1,267.8 L1069.9,264.9 L1071.9,263.4 L1073.3,268.7 L1075.2,280.3 L1076.7,268.7 L1076.7,247.9 L1078.6,245.5 L1081.0,239.2" fill="none" stroke="#7cc46c" stroke-width="3.05" stroke-linejoin="round" stroke-linecap="butt"/>
</svg>
<div class="card" style="left:296px;top:579px;width:1104px;height:72px"></div>
<span class="t b14" style="left:313px;top:615px;">Date Range:</span>
<div class="seg" style="left:410px;top:596px;width:239px;height:38px"></div>
<div class="segact" style="left:603px;top:601px;width:41px;height:28px"></div>
<span class="t segl" style="left:405.5px;top:615px;width:60px;text-align:center;color:#a3abbd">1M</span>
<span class="t segl" style="left:453.5px;top:615px;width:60px;text-align:center;color:#a3abbd">3M</span>
<span class="t segl" style="left:502.5px;top:615px;width:60px;text-align:center;color:#a3abbd">6M</span>
<span class="t segl" style="left:549px;top:615px;width:60px;text-align:center;color:#a3abbd">1Y</span>
<span class="t segl" style="left:593.5px;top:615px;width:60px;text-align:center;color:#0b1220">All</span>
<span class="t sm14" style="left:1165px;top:615px;">Smoothing:</span>
<div class="trk" style="left:1247px;top:610px"></div><div class="trkf" style="left:1247px;top:610px"></div>
<div class="thumb" style="left:1262px;top:607px"></div>
<span class="t sm12" style="left:1351px;top:615px;">7d</span>
<div class="card" style="left:296px;top:683px;width:1104px;height:98px"></div>
<svg class="ic" style="left:313px;top:704.3px;width:15px;height:15px;" viewBox="0 0 24 24" fill="none" stroke="#a6aec0" stroke-width="1.9" stroke-linecap="round" stroke-linejoin="round"><circle cx="12" cy="12" r="10"/><path d="M12 16v-4"/><path d="M12 8h.01"/></svg>
<span class="t abt" style="left:339.6px;top:710px;">About These Metrics</span>
<div class="para" style="left:339px;top:724px;width:1030px"><span class="ln" id="ln1">Research shows that the <b>percentage of 6+ letter words</b> is associated with a 25% reduction in dementia risk per unit increase. Additionally, the practice of</span><br><span class="ln" id="ln2">journaling itself predicts a 53% reduction in all-cause dementia risk.</span></div>
<svg class="ic" style="left:296px;top:817px;width:24px;height:24px;" viewBox="0 0 24 24" fill="none" stroke="#7a8cf6" stroke-width="2" stroke-linecap="round" stroke-linejoin="round"><path d="M16 21v-2a4 4 0 0 0-4-4H6a4 4 0 0 0-4 4v2"/><circle cx="9" cy="7" r="4"/><path d="M22 21v-2a4 4 0 0 0-3-3.87"/><path d="M16 3.13a4 4 0 0 1 0 7.75"/></svg>
<span class="t h-big" style="left:328px;top:829px;">Your Connections</span>
<span class="t sub" style="left:296px;top:863px;">People and interests that appear in your journal entries</span>
<div class="card" style="left:296px;top:897px;width:540px;height:60px"></div>
<div class="card" style="left:860px;top:897px;width:540px;height:60px"></div>
  </div>
  <div id="winborder"></div>
</div>
</body></html>
